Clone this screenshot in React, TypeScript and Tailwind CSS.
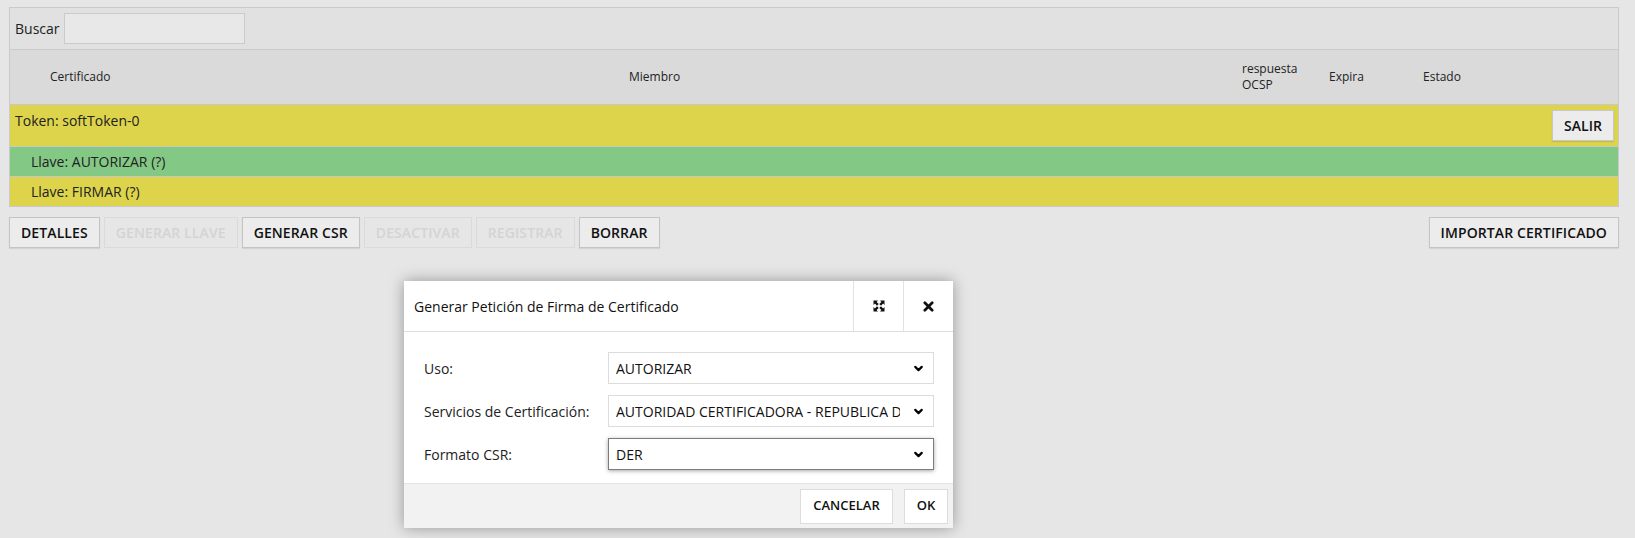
import { ChevronDown } from "lucide-react";

const font = { fontFamily: '"Open Sans", "Liberation Sans", sans-serif' };

function ToolButton({ label, disabled }: { label: string; disabled?: boolean }) {
  return (
    <button
      className={
        disabled
          ? "h-[31px] border border-[#dadada] bg-[#e6e6e6] px-[11px] text-[14px] font-semibold tracking-[0.1px] text-[#d4d4d4]"
          : "h-[31px] border border-[#c4c4c4] bg-[#ececec] px-[11px] text-[14px] font-semibold tracking-[0.1px] text-[#111] shadow-[0_1px_1px_rgba(0,0,0,0.08)]"
      }
    >
      {label}
    </button>
  );
}

function SelectBox({ value, focused }: { value: string; focused?: boolean }) {
  return (
    <div
      className={
        focused
          ? "flex h-[32px] w-[326px] items-center border border-[#7c7c7c] bg-white pl-[7px] pr-[8px] shadow-[0_1px_4px_rgba(0,0,0,0.35)]"
          : "flex h-[32px] w-[326px] items-center border border-[#dcdcdc] bg-white pl-[7px] pr-[8px]"
      }
    >
      <span className="mr-[12px] min-w-0 flex-1 overflow-hidden whitespace-nowrap text-[14px] text-[#111]">{value}</span>
      <ChevronDown className="h-[13px] w-[13px] shrink-0 text-black" strokeWidth={4} />
    </div>
  );
}

export default function App() {
  return (
    <div className="relative h-[538px] w-[1635px] overflow-hidden bg-[#e6e6e6]" style={font}>
      <div className="ml-[9px] mr-[16px] pt-[7px]">
        {/* token table */}
        <div className="border border-[#cacaca] bg-[#e1e1e1]">
          <div className="flex h-[42px] items-center gap-[4px] border-b border-[#cacaca] pl-[5px]">
            <span className="text-[14px] text-[#222]">Buscar</span>
            <div className="h-[31px] w-[181px] border border-[#cbcbcb] bg-[#e8e8e8]" />
          </div>
          <div className="grid h-[55px] grid-cols-[40px_579px_613px_87px_94px_1fr] items-center border-b border-[#c8c8c8] bg-[#dadada] text-[12px] text-[#222]">
            <span />
            <span>Certificado</span>
            <span>Miembro</span>
            <span className="leading-[16px]">
              respuesta
              <br />
              OCSP
            </span>
            <span>Expira</span>
            <span>Estado</span>
          </div>
          <div className="flex h-[42px] items-start justify-between border-b border-[#c8c8c8] bg-[#ddd44c] pl-[5px] pr-[4px] pt-[5px]">
            <span className="pt-[1px] text-[14px] leading-[20px] text-[#222]">Token: softToken-0</span>
            <button className="h-[31px] w-[62px] border border-[#c8c8c8] bg-[#ececec] text-[14px] font-semibold text-[#111] shadow-[0_1px_1px_rgba(0,0,0,0.1)]">
              SALIR
            </button>
          </div>
          <div className="flex h-[30px] items-center border-b border-[#c8c8c8] bg-[#84c886] pl-[21px] text-[14px] text-[#222]">
            Llave: AUTORIZAR (?)
          </div>
          <div className="flex h-[29px] items-center bg-[#ddd44c] pl-[21px] text-[14px] text-[#222]">
            Llave: FIRMAR (?)
          </div>
        </div>

        {/* actions */}
        <div className="mt-[10px] flex items-center justify-between">
          <div className="flex gap-[4px]">
            <ToolButton label="DETALLES" />
            <ToolButton label="GENERAR LLAVE" disabled />
            <ToolButton label="GENERAR CSR" />
            <ToolButton label="DESACTIVAR" disabled />
            <ToolButton label="REGISTRAR" disabled />
            <ToolButton label="BORRAR" />
          </div>
          <ToolButton label="IMPORTAR CERTIFICADO" />
        </div>
      </div>

      {/* dialog */}
      <div className="absolute left-[404px] top-[281px] w-[549px] bg-white shadow-[0_0_14px_rgba(0,0,0,0.35)]">
        <div className="flex h-[51px] items-stretch border-b border-[#dedede]">
          <div className="flex flex-1 items-center pl-[10px] text-[14px] text-[#111]">
            Generar Petición de Firma de Certificado
          </div>
          <div className="flex w-[50px] items-center justify-center border-l border-[#e2e2e2]">
            <svg viewBox="0 0 12 12" className="h-[12px] w-[12px]">
              <path d="M0.5 0.5h4.5L3.6 1.9 5.7 4 4 5.7 1.9 3.6 0.5 5z" fill="#111" />
              <path d="M11.5 0.5v4.5L10.1 3.6 8 5.7 6.3 4 8.4 1.9 7 0.5z" fill="#111" />
              <path d="M0.5 11.5V7l1.4 1.4L4 6.3 5.7 8 3.6 10.1 5 11.5z" fill="#111" />
              <path d="M11.5 11.5H7l1.4-1.4L6.3 8 8 6.3l2.1 2.1L11.5 7z" fill="#111" />
            </svg>
          </div>
          <div className="flex w-[50px] items-center justify-center border-l border-[#e2e2e2]">
            <svg viewBox="0 0 12 12" className="h-[11px] w-[11px]">
              <path d="M2 2l8 8M10 2l-8 8" stroke="#111" strokeWidth="3" strokeLinecap="round" />
            </svg>
          </div>
        </div>
        <div className="flex flex-col gap-[11px] pb-[13px] pl-[20px] pr-[19px] pt-[20px]">
          <div className="flex items-center">
            <span className="w-[184px] text-[14px] text-[#222]">Uso:</span>
            <SelectBox value="AUTORIZAR" />
          </div>
          <div className="flex items-center">
            <span className="w-[184px] text-[14px] text-[#222]">Servicios de Certificación:</span>
            <SelectBox value="AUTORIDAD CERTIFICADORA - REPUBLICA DE" />
          </div>
          <div className="flex items-center">
            <span className="w-[184px] text-[14px] text-[#222]">Formato CSR:</span>
            <SelectBox value="DER" focused />
          </div>
        </div>
        <div className="flex h-[45px] items-center justify-end gap-[11px] border-t border-[#e4e4e4] bg-[#f2f2f2] pr-[5px]">
          <button className="h-[35px] w-[93px] border border-[#dcdcdc] bg-white text-[13px] font-semibold text-[#111]">
            CANCELAR
          </button>
          <button className="h-[35px] w-[44px] border border-[#dcdcdc] bg-white text-[13px] font-semibold text-[#111]">
            OK
          </button>
        </div>
      </div>
    </div>
  );
}
